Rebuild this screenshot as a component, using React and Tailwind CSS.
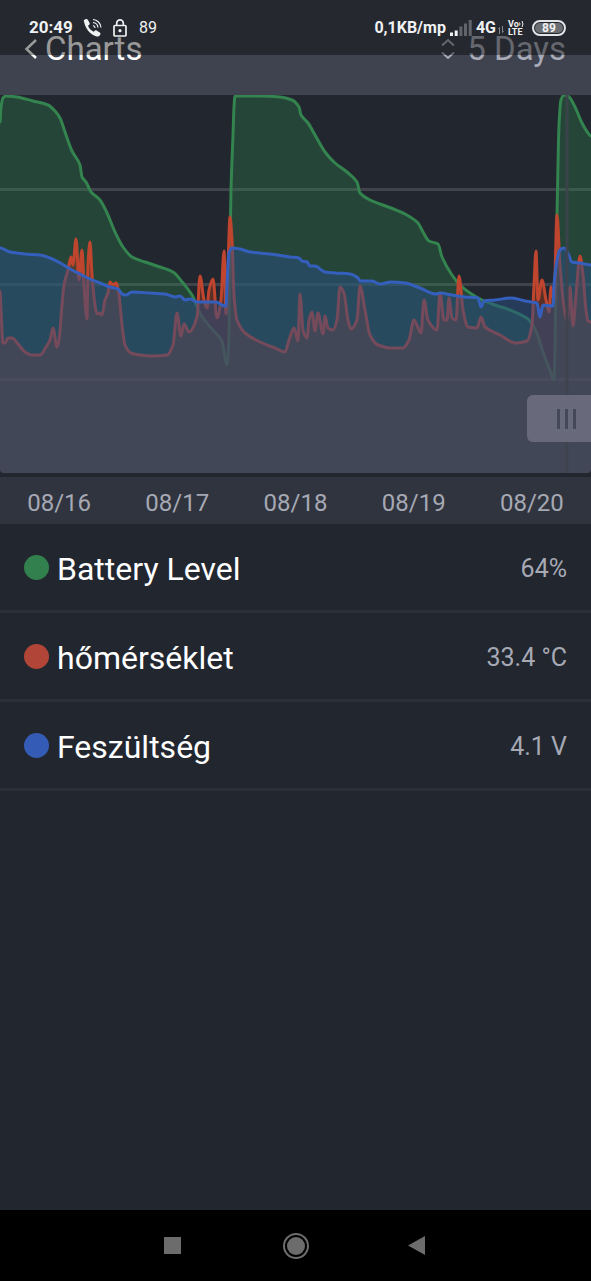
import React from 'react';

const CHART_WIDTH = 591;
const CHART_HEIGHT = 378;

const batteryPoints = [
  [0, 27], [1, 12], [3, 3], [6, 1], [17, 2], [33, 6], [48, 10], [55, 16], [60, 23], [65, 37], [72, 56],
  [80, 70], [82, 82], [86, 87], [91, 97], [100, 105], [107, 118], [115, 137], [123, 152], [132, 162],
  [145, 167], [160, 172], [173, 177], [183, 188], [192, 200], [201, 220], [211, 233], [222, 246],
  [227, 270], [229, 240], [230, 150], [231, 95], [233, 40], [234, 12], [235, 1], [260, 1], [280, 2],
  [292, 5], [299, 12], [301, 20], [308, 28], [315, 40], [325, 57], [335, 68], [347, 77], [357, 87],
  [360, 98], [370, 105], [391, 113], [405, 119], [418, 128], [423, 137], [429, 146], [438, 149],
  [442, 162], [452, 180], [460, 190], [470, 198], [482, 205], [495, 210], [510, 215], [528, 224],
  [536, 236], [543, 257], [551, 278], [554, 285], [555, 250], [557, 120], [558, 70], [559, 30],
  [561, 5], [564, 0], [569, 2], [575, 12], [582, 28], [588, 38], [591, 41],
];

const temperaturePoints = [
  [0, 196], [1, 215], [3, 248], [5, 248], [8, 243], [12, 243], [18, 249], [25, 257], [32, 260],
  [40, 260], [46, 252], [50, 245], [53, 233], [57, 252], [59, 245], [62, 210], [64, 190], [68, 175],
  [71, 162], [73, 170], [76, 144], [79, 185], [82, 155], [84, 190], [87, 224], [88, 170], [90, 147],
  [92, 180], [95, 210], [97, 219], [99, 218], [102, 220], [105, 205], [108, 198], [110, 187],
  [113, 190], [116, 188], [119, 200], [122, 230], [125, 250], [131, 258], [140, 260], [153, 261],
  [167, 260], [173, 250], [177, 218], [181, 241], [184, 229], [189, 237], [197, 222], [200, 181],
  [204, 205], [207, 213], [209, 195], [213, 184], [217, 223], [221, 205], [224, 156], [226, 219],
  [228, 170], [230, 122], [232, 145], [234, 200], [237, 225], [245, 238], [260, 247], [275, 253],
  [285, 257], [289, 245], [294, 233], [298, 246], [300, 199], [303, 235], [307, 243], [309, 225],
  [312, 217], [315, 236], [318, 218], [323, 239], [325, 221], [328, 233], [333, 235], [337, 225],
  [340, 192], [344, 198], [348, 225], [351, 234], [357, 225], [360, 191], [365, 215], [370, 240],
  [378, 250], [391, 253], [403, 253], [409, 245], [414, 225], [421, 238], [424, 205], [428, 225],
  [437, 235], [440, 198], [444, 225], [447, 225], [449, 203], [452, 223], [456, 225], [459, 181],
  [463, 215], [468, 232], [477, 233], [481, 222], [485, 232], [500, 240], [516, 248], [527, 246],
  [532, 230], [534, 190], [536, 156], [538, 205], [542, 185], [546, 205], [549, 217], [551, 192],
  [554, 205], [557, 120], [560, 170], [564, 212], [567, 225], [570, 192], [573, 231], [576, 200],
  [580, 161], [583, 180], [586, 215], [588, 226], [591, 227],
];

const voltagePoints = [
  [0, 153], [10, 157], [25, 159], [40, 160], [50, 163], [62, 169], [72, 175], [80, 179], [90, 184],
  [100, 188], [110, 192], [118, 194], [122, 199], [126, 200], [132, 197], [150, 198], [165, 199],
  [175, 202], [180, 201], [185, 205], [190, 204], [197, 207], [205, 207], [216, 207], [222, 210],
  [226, 211], [227, 190], [229, 158], [232, 153], [240, 154], [250, 157], [270, 159], [290, 162],
  [299, 163], [302, 166], [307, 167], [310, 171], [315, 171], [325, 177], [335, 178], [350, 179],
  [358, 183], [360, 186], [372, 186], [380, 189], [391, 187], [405, 188], [420, 193], [436, 199],
  [440, 198], [452, 200], [465, 202], [478, 203], [481, 212], [484, 206], [495, 205], [512, 203],
  [525, 206], [537, 208], [540, 222], [543, 210], [553, 211], [554, 190], [557, 165], [560, 155],
  [564, 153], [568, 158], [572, 167], [580, 168], [591, 170],
];

const days = ['08/16', '08/17', '08/18', '08/19', '08/20'];

const metrics = [
  { name: 'Battery Level', value: '64%', dot: 'bg-[#32804d]' },
  { name: 'hőmérséklet', value: '33.4 °C', dot: 'bg-[#b04538]' },
  { name: 'Feszültség', value: '4.1 V', dot: 'bg-[#345cb6]' },
];

// Slope of the curve at point i, flat at peaks so it does not overshoot
const tangentAt = (points, i) => {
  const prev = points[i - 1];
  const current = points[i];
  const next = points[i + 1];
  if (!prev || !next) return 0;

  const before = (current[1] - prev[1]) / (current[0] - prev[0]);
  const after = (next[1] - current[1]) / (next[0] - current[0]);
  if (before * after <= 0) return 0;
  return (2 * before * after) / (before + after);
};

// Smooth curve through all points
const linePath = (points) => {
  let d = `M${points[0][0]} ${points[0][1]}`;
  for (let i = 0; i < points.length - 1; i++) {
    const [x0, y0] = points[i];
    const [x1, y1] = points[i + 1];
    const dx = (x1 - x0) / 3;
    const c0 = y0 + tangentAt(points, i) * dx;
    const c1 = y1 - tangentAt(points, i + 1) * dx;
    d += `C${x0 + dx} ${c0} ${x1 - dx} ${c1} ${x1} ${y1}`;
  }
  return d;
};

const Series = ({ points, stroke, fill, fillOpacity }) => {
  const line = linePath(points);

  return (
    <g>
      <path d={`${line}V${CHART_HEIGHT}H0Z`} fill={fill} fillOpacity={fillOpacity} />
      <path d={line} fill="none" stroke={stroke} strokeWidth={3} strokeLinejoin="round" />
    </g>
  );
};

const Chart = () => (
  <div className="relative overflow-hidden rounded-b">
    <svg
      viewBox={`0 0 ${CHART_WIDTH} ${CHART_HEIGHT}`}
      preserveAspectRatio="none"
      className="block h-[378px] w-full"
      role="img"
      aria-label="Charts"
    >
      <path d="M0 94.5H591M0 189.5H591M0 284.5H591" stroke="#40434b" strokeWidth={3} />
      <Series points={batteryPoints} stroke="#34844f" fill="#31854f" fillOpacity={0.33} />
      <Series points={temperaturePoints} stroke="#c0452f" fill="#86391f" fillOpacity={0.55} />
      <Series points={voltagePoints} stroke="#355fbd" fill="#294f86" fillOpacity={0.5} />
      <path d="M567 0V378" stroke="#3e424c" strokeWidth={3} strokeOpacity={0.9} />
    </svg>
    <button
      type="button"
      aria-label="Drag"
      className="absolute right-0 top-[300px] flex h-[47px] w-16 items-center justify-end gap-[5px] rounded-l-md bg-[#6a6c7d]/95 pr-[15px]"
    >
      <span className="h-5 w-[3px] bg-[#454957]" />
      <span className="h-5 w-[3px] bg-[#454957]" />
      <span className="h-5 w-[3px] bg-[#454957]" />
    </button>
  </div>
);

const StatusBar = () => (
  <div className="absolute inset-x-0 top-0 flex h-[55px] items-center justify-between bg-black/40 pl-[29px] pr-[25px] text-[#f0f1f3]">
    <div className="flex items-center">
      <span className="w-[54px] text-[17px] font-bold">20:49</span>
      <svg viewBox="0 0 20 20" className="mr-[10px] h-5 w-5" fill="none">
        <path
          d="M1 3.6C.4 2.4 1 1.800 2.300 1.200c1-.4 2-.5 2.500.5l1.700 3c.5.9.2 1.600-.5 2.200L5 7.800c.8 2.300 3 4.700 5.600 6l1.200-1c.7-.6 1.300-.6 2.100-.1l2.900 1.900c.8.6.9 1.300.4 2.200-.8 1.300-1.900 2-3.400 1.700C7.500 17.200 2.400 10.800 1 3.600Z"
          fill="currentColor"
        />
        <path d="M10 7.500c1.100.3 1.900 1.200 2.100 2.500M10 4.500c2.700.3 4.700 2.300 5 5M10 1.500c4.300.3 7.600 3.600 8 8" stroke="currentColor" strokeWidth={1.2} />
      </svg>
      <svg viewBox="0 0 14 18" className="mr-3 h-[18px] w-3.5" fill="none" stroke="currentColor" strokeWidth={1.7}>
        <rect x="1" y="6.500" width="12" height="10.500" rx="1" />
        <path d="M3.700 6.500V4.200a3.300 3.300 0 0 1 6.600 0v2.300" />
        <circle cx="7" cy="11.700" r="1.600" fill="currentColor" stroke="none" />
      </svg>
      <span className="text-base">89</span>
    </div>
    <div className="flex items-center">
      <span className="text-base font-bold">0,1KB/mp</span>
      <svg viewBox="0 0 22 16" className="ml-1 mr-1 h-4 w-[22px]">
        <path d="M0 12.500h3V16H0zM4.700 10.500h3V16h-3z" fill="#f0f1f3" />
        <path d="M9.400 6.500h3V16h-3zM14 3.500h3V16h-3zM18.700 0h3V16h-3z" fill="#62656a" />
      </svg>
      <span className="text-base font-bold">4G</span>
      <svg viewBox="0 0 6 8" className="ml-0.5 mr-1 mt-1 h-2 w-1.5" fill="none" stroke="#85888c">
        <path d="M1.500 8V1.500L.5 3M4.500 0v6.500L5.500 5" />
      </svg>
      <span className="mr-2 flex w-4 flex-col text-[9px] font-bold leading-[8px]">
        <span className="flex items-center">
          Vo
          <svg viewBox="0 0 5 8" className="h-2 w-[5px] shrink-0" fill="none" stroke="currentColor">
            <path d="M.5 2.500q1 1.500 0 3M3 1q2 3 0 6" />
          </svg>
        </span>
        <span>LTE</span>
      </span>
      <span className="flex h-4 w-[34px] items-center justify-center rounded-full border-2 border-[#e4e5e7] p-px">
        <span className="h-full w-full rounded-full bg-[#6b6e72] text-center text-xs font-bold leading-[10px]">89</span>
      </span>
    </div>
  </div>
);

const Header = () => (
  <header className="relative h-[95px] bg-[#3e434f] pl-6 pr-[25px] pt-[29px]">
    <div className="flex h-10 items-center justify-between text-[33px] leading-10">
      <button type="button" className="flex items-center gap-2 text-white">
        <svg viewBox="0 0 13 22" className="h-[22px] w-[13px]" fill="none" stroke="currentColor" strokeWidth={2.5}>
          <path d="M12 2 2.500 11l9.500 9" />
        </svg>
        <h1>Charts</h1>
      </button>
      <button type="button" className="flex items-center gap-3 text-[#a9acb8]">
        <svg viewBox="0 0 14 22" className="h-[22px] w-3.5" fill="none" stroke="currentColor" strokeWidth={2}>
          <path d="M1 7.500 7 2l6 5.500M1 14.500 7 20l6-5.500" />
        </svg>
        5 Days
      </button>
    </div>
    <StatusBar />
  </header>
);

const NavigationBar = () => (
  <nav className="grid h-[71px] grid-cols-[1fr_246px_1fr] items-center bg-black text-[#6c6c6c]">
    <button type="button" aria-label="Recent apps" className="-mr-[9px] justify-self-end">
      <svg viewBox="0 0 18 18" className="block h-[18px] w-[18px]" fill="currentColor">
        <path d="M0 0h17v17H0z" />
      </svg>
    </button>
    <button type="button" aria-label="Home" className="justify-self-center">
      <svg viewBox="0 0 26 26" className="block h-[26px] w-[26px]">
        <circle cx="13" cy="13" r="12" fill="none" stroke="currentColor" strokeWidth={2} />
        <circle cx="13" cy="13" r="9" fill="currentColor" />
      </svg>
    </button>
    <button type="button" aria-label="Back" className="-ml-[11px] justify-self-start">
      <svg viewBox="0 0 18 20" className="block h-5 w-[18px]" fill="currentColor">
        <path d="M17 0v19L0 9.500Z" />
      </svg>
    </button>
  </nav>
);

export default function App() {
  return (
    <div className="flex min-h-screen flex-col bg-[#22262f] font-['Roboto',sans-serif]">
      <Header />
      <main className="grow">
        <Chart />
        <div className="mt-1 grid h-[47px] grid-cols-5 items-center bg-[#30343e] pt-1 text-center text-2xl text-[#a6a9b4]">
          {days.map((day) => (
            <span key={day}>{day}</span>
          ))}
        </div>
        <ul>
          {metrics.map((metric) => (
            <li
              key={metric.name}
              className="flex h-[89px] items-center border-b-[3px] border-[#2c3039] px-6"
            >
              <span className={`mr-2 h-[25px] w-[25px] rounded-full ${metric.dot}`} />
              <span className="grow pt-1 text-[32px] text-white">{metric.name}</span>
              <span className="pt-1 text-[25px] text-[#a6a9b4]">{metric.value}</span>
            </li>
          ))}
        </ul>
      </main>
      <NavigationBar />
    </div>
  );
}
